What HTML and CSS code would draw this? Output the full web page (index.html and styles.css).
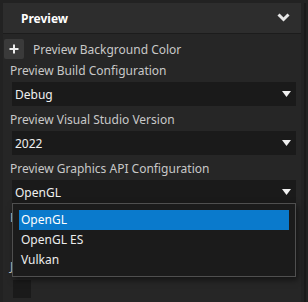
FILE: index.html
```html
<!DOCTYPE html>
<html lang="en">

<head>
    <meta charset="UTF-8">
    <meta name="viewport" content="width=device-width, initial-scale=1.0">
    <title>Preview settings</title>
    <link rel="stylesheet" href="styles.css">
</head>

<body>
    <div class="frame">
        <section class="panel">
            <header class="panel-head">
                <h2 class="title">Preview</h2>
                <svg class="chevron" width="13" height="9" viewBox="0 0 13 9">
                    <polyline points="1.5,1.5 6.5,6.5 11.5,1.5" fill="none" stroke="#e6e6e6" stroke-width="3" />
                </svg>
            </header>
            <div class="panel-body">
                <div class="color-row">
                    <button class="add-btn">
                        <svg width="10" height="10" viewBox="0 0 10 10"><path d="M5 0.5v9M0.5 5h9" stroke="#eeeeee" stroke-width="2" /></svg>
                    </button>
                    <span class="color-label">Preview Background Color</span>
                </div>

                <div class="field">
                    <label class="field-label">Preview Build Configuration</label>
                    <div class="select">
                        <span>Debug</span>
                        <svg class="arrow" width="9" height="6" viewBox="0 0 9 6"><polygon points="0,0 9,0 4.5,6" fill="#f0f0f0" /></svg>
                    </div>
                </div>

                <div class="field">
                    <label class="field-label">Preview Visual Studio Version</label>
                    <div class="select">
                        <span>2022</span>
                        <svg class="arrow" width="9" height="6" viewBox="0 0 9 6"><polygon points="0,0 9,0 4.5,6" fill="#f0f0f0" /></svg>
                    </div>
                </div>

                <div class="field">
                    <label class="field-label">Preview Graphics API Configuration</label>
                    <div class="select open">
                        <span>OpenGL</span>
                        <svg class="arrow" width="9" height="6" viewBox="0 0 9 6"><polygon points="0,0 9,0 4.5,6" fill="#f0f0f0" /></svg>
                        <ul class="popup">
                            <li class="selected">OpenGL</li>
                            <li>OpenGL ES</li>
                            <li>Vulkan</li>
                        </ul>
                    </div>
                </div>

                <!-- mostly hidden behind the open popup -->
                <div class="field">
                    <label class="field-label">Preview Platform</label>
                    <div class="select"></div>
                </div>

                <div class="field check">
                    <label class="field-label">Just My Code</label>
                    <span class="checkbox"></span>
                </div>
            </div>
        </section>
        <div class="rail"></div>
    </div>
</body>

</html>
```

FILE: styles.css
```css
* {
    margin: 0;
    padding: 0;
    box-sizing: border-box;
}

body {
    width: 308px;
    height: 302px;
    overflow: hidden;
    background-color: #222222;
    font-family: "Noto Sans", "Open Sans", sans-serif;
    font-size: 12px;
    color: #c8c8c8;
}

.frame {
    display: flex;
    height: 100%;
    padding: 3px 0 0 3px;
}

.panel {
    width: 298px;
    background-color: #262626;
}

.rail {
    width: 2px;
    margin-left: 3px;
    background-color: #1a1a1a;
}

.panel-head {
    height: 31px;
    display: flex;
    align-items: center;
    justify-content: space-between;
    padding: 0 11px 0 18px;
    background-color: #2d2d2d;
    border-bottom: 1px solid #1c1c1c;
}

.title {
    font-size: 12px;
    font-weight: 700;
    color: #ffffff;
}

.chevron {
    margin-top: -2px;
}

.panel-body {
    padding: 5px 5px 0 1px;
}

.color-row {
    display: flex;
    align-items: center;
    height: 20px;
}

.add-btn {
    width: 20px;
    height: 20px;
    display: flex;
    align-items: center;
    justify-content: center;
    border: none;
    border-radius: 2px;
    background-color: #3a3a3a;
}

.color-label {
    margin-left: 9px;
}

.field {
    display: flex;
    flex-direction: column;
    margin-top: 2px;
}

.field + .field {
    margin-top: 4px;
}

.field-label {
    height: 20px;
    line-height: 20px;
    padding-left: 6px;
}

.select {
    position: relative;
    height: 24px;
    margin: 1px 0 0 8px;
    display: flex;
    align-items: center;
    justify-content: space-between;
    padding: 0 5px 0 3px;
    background-color: #1a1a1a;
    color: #f0f0f0;
}

.popup {
    position: absolute;
    top: 23px;
    left: 0;
    right: 0;
    list-style: none;
    padding: 6px;
    background-color: #1b1b1b;
    border: 1px solid #4f4f4f;
    box-shadow: 2px 3px 6px rgba(0, 0, 0, 0.5);
    z-index: 2;
}

.popup li {
    height: 20px;
    line-height: 20px;
    padding-left: 2px;
    color: #ececec;
}

.popup li.selected {
    background-color: #0a7acc;
    color: #ffffff;
}

.check .checkbox {
    width: 18px;
    height: 18px;
    margin: 3px 0 0 9px;
    background-color: #1a1a1a;
}
```
